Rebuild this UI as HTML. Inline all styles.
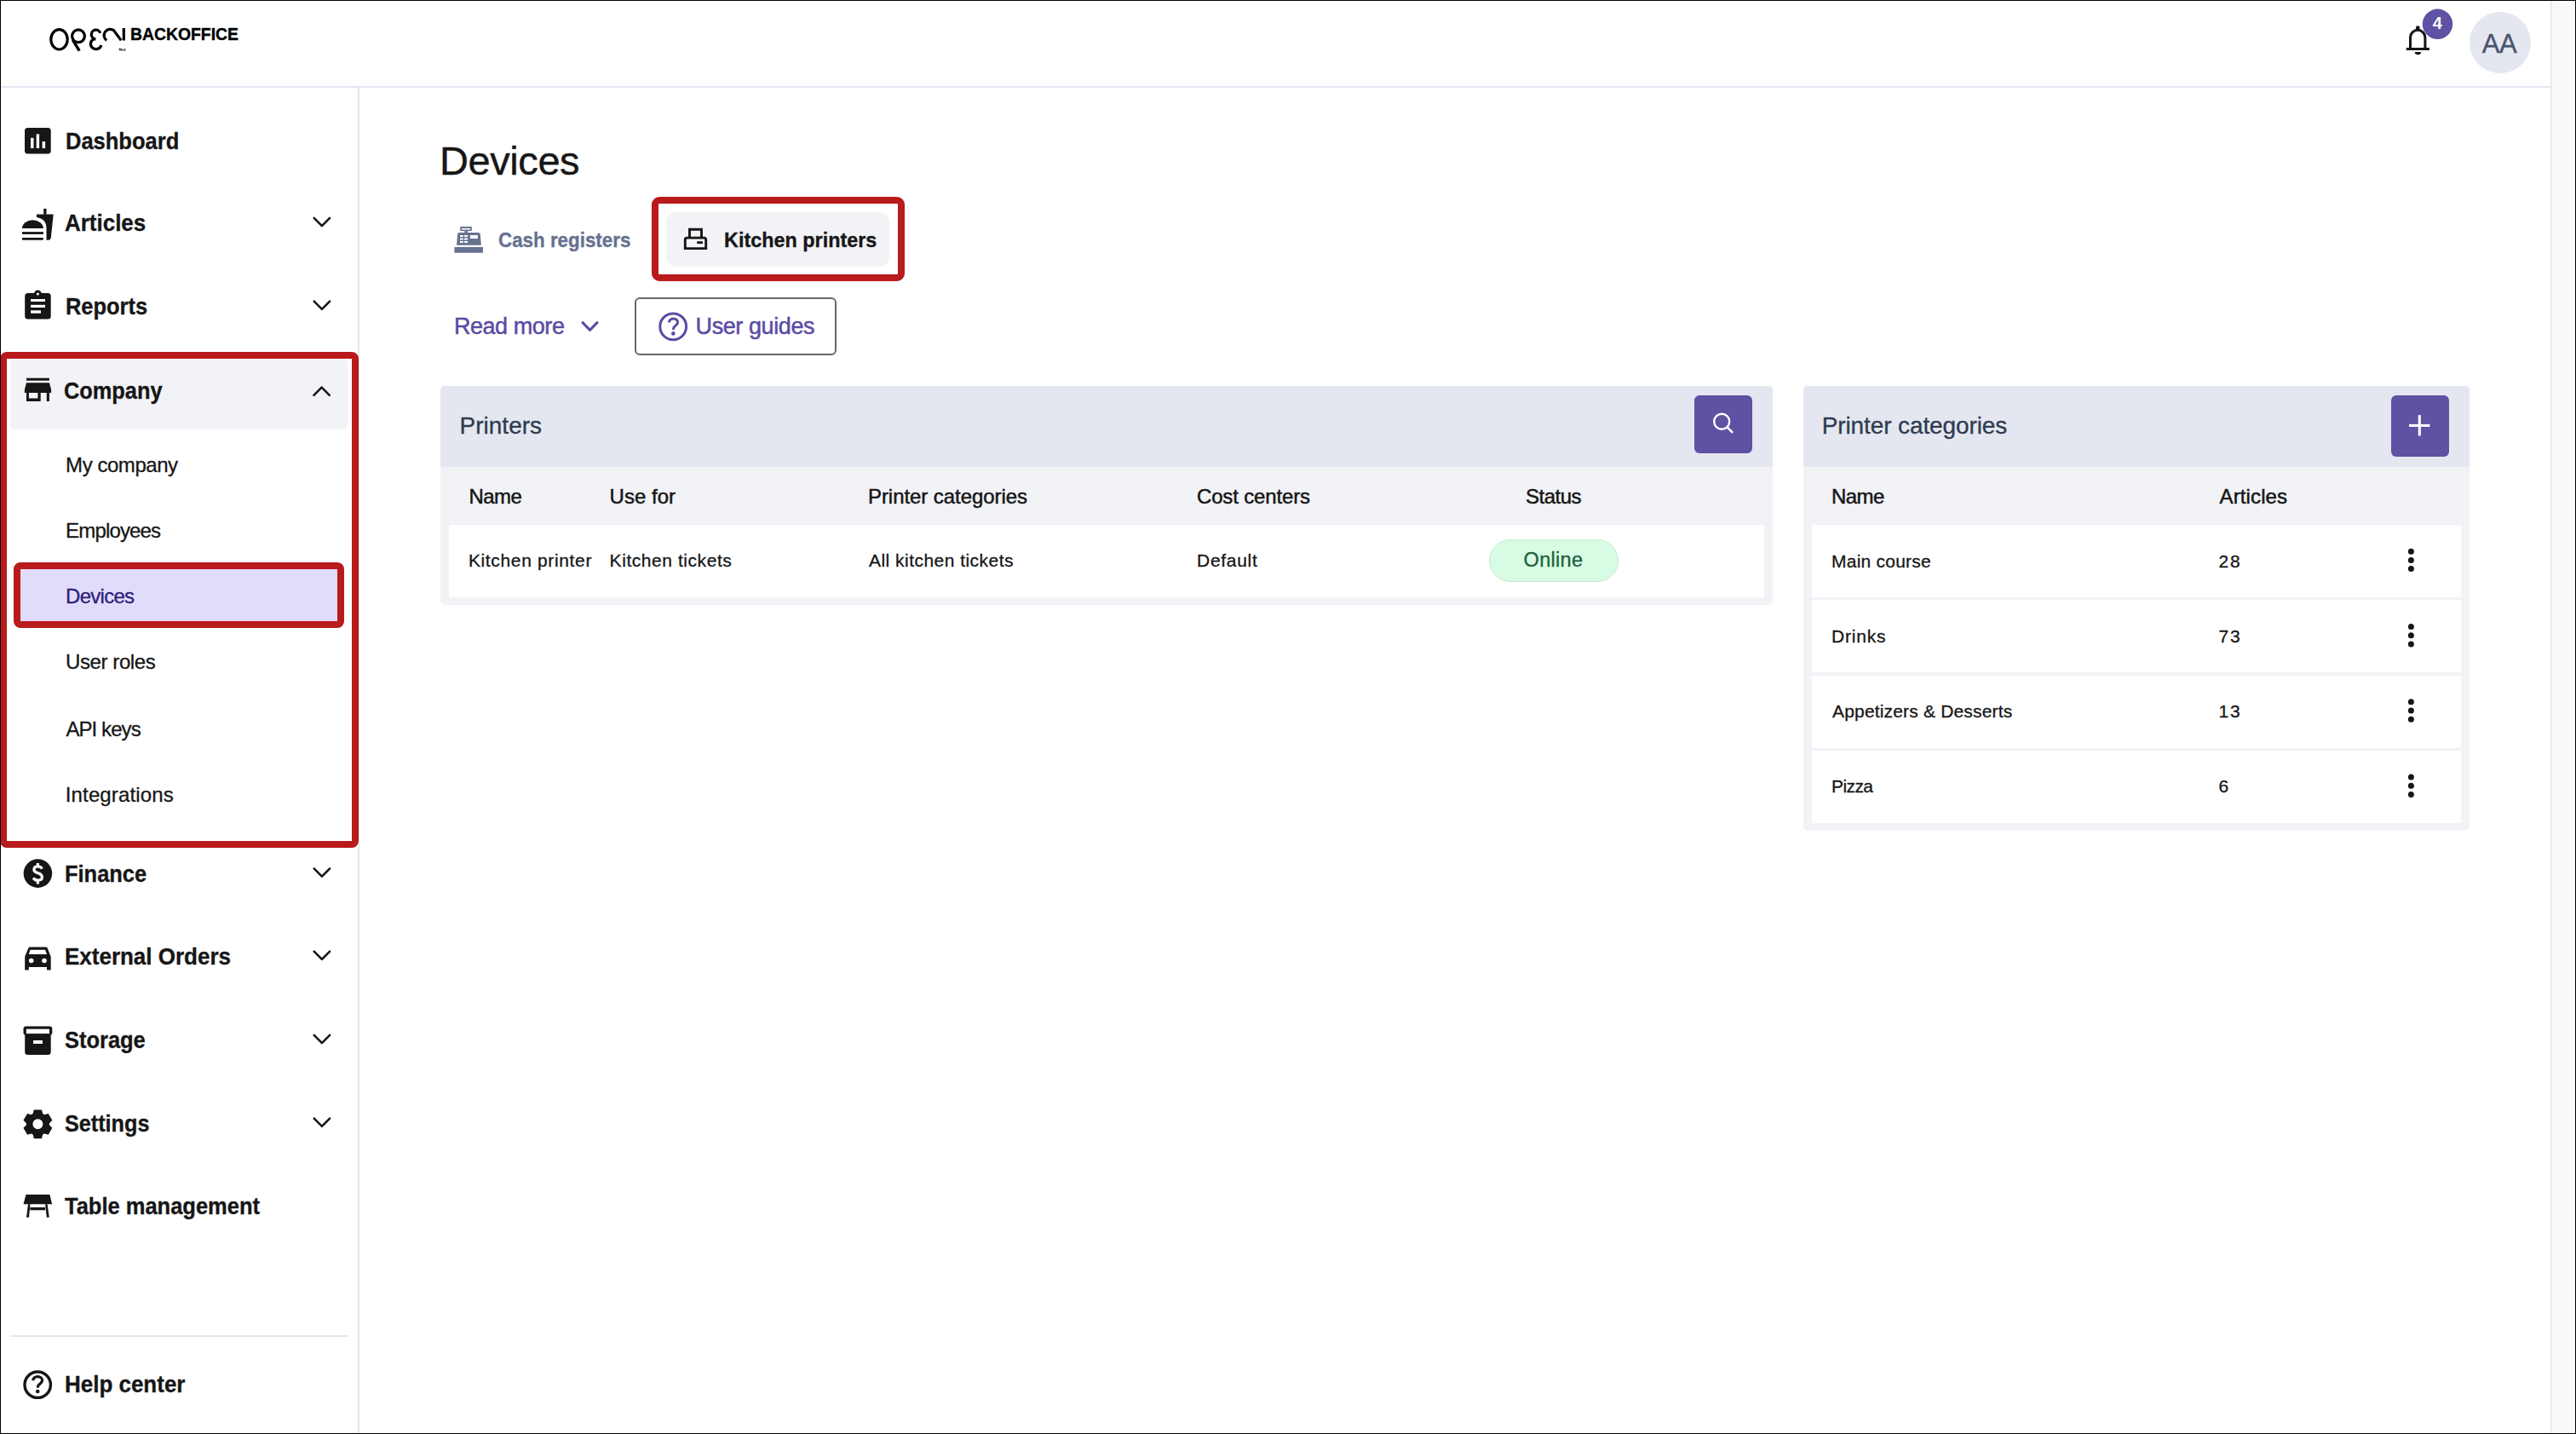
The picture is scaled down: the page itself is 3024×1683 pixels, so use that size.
<!DOCTYPE html>
<html><head><meta charset="utf-8"><title>Devices</title>
<style>
html,body{margin:0;padding:0;}
body{width:3024px;height:1683px;position:relative;overflow:hidden;background:#fff;font-family:"Liberation Sans",sans-serif;}
.a{position:absolute;}
.t{position:absolute;white-space:nowrap;}
svg{position:absolute;overflow:visible;}
</style></head><body>
<!-- scrollbar -->
<div class="a" style="left:2994px;top:1px;width:29px;height:1681px;background:#f9f9f9"></div>
<div class="a" style="left:2994px;top:1px;width:2px;height:1681px;background:#e9e9e9"></div>
<!-- header border -->
<div class="a" style="left:1px;top:101px;width:2993px;height:2px;background:#e3e7f0"></div>
<!-- sidebar border -->
<div class="a" style="left:420px;top:103px;width:2px;height:1579px;background:#e3e7f0"></div>
<!-- sidebar company bg -->
<div class="a" style="left:12px;top:421px;width:396px;height:83px;border-radius:5px;background:#f2f3f7"></div>
<div class="a" style="left:24px;top:668px;width:372px;height:61px;background:#e2dcfb"></div>
<div class="a" style="left:16px;top:660px;width:388px;height:77px;box-sizing:border-box;border:8px solid #b91a1c;border-radius:8px"></div>
<div class="a" style="left:0px;top:413px;width:420.5px;height:582px;box-sizing:border-box;border:8px solid #b91a1c;border-radius:8px"></div>
<!-- sidebar divider -->
<div class="a" style="left:12px;top:1567px;width:396px;height:2px;background:#e3e7f0"></div>

<!-- tabs -->
<div class="a" style="left:782px;top:249px;width:262px;height:64px;border-radius:12px;background:#f2f3f7"></div>
<div class="a" style="left:765px;top:231px;width:297px;height:99px;box-sizing:border-box;border:8px solid #b91a1c;border-radius:9px"></div>
<!-- user guides button -->
<div class="a" style="left:745px;top:349px;width:237px;height:68px;box-sizing:border-box;border:2px solid #676767;border-radius:6px"></div>

<!-- printers card -->
<div class="a" style="left:517px;top:453px;width:1564px;height:257px;border-radius:5px;background:#f2f3f7"></div>
<div class="a" style="left:517px;top:453px;width:1564px;height:94.8px;border-radius:5px 5px 2px 2px;background:#e4e7f0"></div>
<div class="a" style="left:527px;top:616px;width:1544px;height:85px;background:#fff"></div>
<div class="a" style="left:1989px;top:464px;width:68px;height:68px;border-radius:6px;background:#5f51a3"></div>
<div class="a" style="left:1748.3px;top:633px;width:152px;height:50px;box-sizing:border-box;border-radius:25px;background:#d7fbe3;border:1.5px solid #c2eecf"></div>

<!-- categories card -->
<div class="a" style="left:2117px;top:453.4px;width:782px;height:521.4px;border-radius:5px;background:#f2f3f7"></div>
<div class="a" style="left:2117px;top:453.4px;width:782px;height:94.6px;border-radius:5px 5px 2px 2px;background:#e4e7f0"></div>
<div class="a" style="left:2127px;top:616px;width:761.8px;height:85px;background:#fff"></div>
<div class="a" style="left:2127px;top:704.3px;width:761.8px;height:85px;background:#fff"></div>
<div class="a" style="left:2127px;top:792.6px;width:761.8px;height:85px;background:#fff"></div>
<div class="a" style="left:2127px;top:880.9px;width:761.8px;height:85px;background:#fff"></div>
<div class="a" style="left:2807px;top:464px;width:68px;height:72px;border-radius:6px;background:#5f51a3"></div>

<!-- avatar -->
<div class="a" style="left:2898.5px;top:13.8px;width:72px;height:72px;border-radius:50%;background:#e4e7f0"></div>

<svg style="left:0;top:0" width="3024" height="1683" viewBox="0 0 3024 1683">
 <g fill="none" stroke="#000" stroke-width="2.8">
  <!-- logo -->
  <g transform="translate(50,20)" stroke-width="3.2">
   <ellipse cx="19.5" cy="26.3" rx="9.7" ry="11.7"/>
   <circle cx="42" cy="22.3" r="7.4"/>
   <path d="M35.4 26.8 L43.2 39.6" stroke-width="3.4"/>
   <path d="M67.8 18.8 A5.4 5.4 0 1 0 62.4 25.8 L60.5 25.8 A6.3 6.1 0 1 0 68.8 33"/>
   <path d="M75.2 27.4 A7 7 0 1 1 83.5 15.6 L92.2 27.4"/>
   <rect x="93.7" y="13" width="3.2" height="14.5" fill="#000" stroke="none"/>
   <path d="M89.5 37.5 H92.3 M90.9 37.5 V39.8 M92.8 39.8 V37.5 L94.8 39.2 L96.8 37.5 V39.8" stroke-width="0.9"/>
  </g>
 </g>
 <!-- bell -->
 <g fill="#161616">
  <rect x="2824.8" y="56" width="27.1" height="3"/>
  <path d="M2829.5 57 V44 A8.7 8.7 0 0 1 2846.9 44 V57" fill="none" stroke="#161616" stroke-width="3"/>
  <rect x="2835.9" y="30.3" width="4.8" height="5" rx="2.4"/>
  <path d="M2834.8 61 H2842.1 A3.65 3.2 0 0 1 2834.8 61 Z"/>
 </g>
 <circle cx="2861.5" cy="28.3" r="17.7" fill="#5f51a3"/>

 <!-- sidebar icons -->
 <g fill="#161616">
  <!-- dashboard -->
  <rect x="29" y="150" width="30.7" height="30.4" rx="3.5"/>
  <rect x="36" y="161.8" width="3.5" height="12.2" fill="#fff"/>
  <rect x="42.7" y="157.4" width="3.4" height="16.6" fill="#fff"/>
  <rect x="49.6" y="166" width="3.5" height="8" fill="#fff"/>
  <!-- articles -->
  <g transform="translate(20,240)">
   <path d="M5.9 28.1 A12.5 9.8 0 0 1 30.9 28.1 Z"/>
   <rect x="5.9" y="32.1" width="25" height="2.8"/>
   <path d="M5.9 38.9 H30.9 V40.4 Q30.9 41.7 29.6 41.7 H7.2 Q5.9 41.7 5.9 40.4 Z"/>
   <rect x="31.2" y="4.9" width="3.3" height="7"/>
   <path d="M23 11.5 H42.7 L39.8 39 Q39.4 41.7 37 41.7 H34.5 V28 Q34.5 17 23 15 Z"/>
  </g>
  <!-- reports -->
  <g transform="translate(20,335)">
   <rect x="9.2" y="9.1" width="30.5" height="30.5" rx="3.5"/>
   <circle cx="24.4" cy="10.2" r="4.6"/>
   <circle cx="24.4" cy="9.9" r="1.5" fill="#fff"/>
   <rect x="16" y="16" width="17" height="3" fill="#fff"/>
   <rect x="16" y="22.8" width="17" height="3.2" fill="#fff"/>
   <rect x="16" y="29.3" width="12" height="3.4" fill="#fff"/>
  </g>
  <!-- company store -->
  <rect x="31" y="443.7" width="26.9" height="3"/>
  <path d="M31 449.2 H57.9 L60.1 457 V460.9 H28.9 V457 Z"/>
  <path d="M31 460.9 H47.7 V471 H31 Z M33.9 460.9 V467.6 H44.4 V460.9 Z" fill-rule="evenodd"/>
  <rect x="54.8" y="460.9" width="3.1" height="10.1"/>
  <!-- finance -->
  <circle cx="44.4" cy="1025.1" r="16.8"/>
  <!-- car -->
  <g transform="translate(20,1100)">
   <path d="M13.4 12.5 Q13.8 11.5 15 11.5 H34 Q35.2 11.5 35.6 12.5 L39.7 22.7 V38 Q39.7 38.5 39.2 38.5 H35.5 Q35 38.5 35 38 V34.9 H13.8 V38 Q13.8 38.5 13.3 38.5 H9.7 Q9.2 38.5 9.2 38 V22.7 Z"/>
   <path d="M15.5 14.8 H33 L35 20 H13.8 Z" fill="#fff"/>
   <circle cx="16.7" cy="27.5" r="2.8" fill="#fff"/>
   <circle cx="32" cy="27.5" r="2.8" fill="#fff"/>
  </g>
  <!-- storage -->
  <g transform="translate(20,1195)">
   <rect x="7.5" y="9.4" width="33.8" height="10.5" rx="3"/>
   <rect x="10.8" y="12.7" width="27.2" height="5.4" fill="#fff"/>
   <path d="M9.2 19.9 H39.7 V39.4 Q39.7 42.9 36.2 42.9 H12.7 Q9.2 42.9 9.2 39.4 Z"/>
   <rect x="19" y="26" width="11" height="4" fill="#fff"/>
  </g>
  <!-- table -->
  <g transform="translate(20,1390)">
   <path d="M10.5 12 H38.4 L41.1 23.2 H7.5 Z"/>
   <path d="M13 23.2 H15.5 L14 38.7 H11 Z"/>
   <path d="M33.1 23.2 H35.6 L37.8 38.7 H34.8 Z"/>
   <rect x="15.3" y="27" width="17.8" height="3.3"/>
  </g>
 </g>
 <!-- finance $ -->
 <g transform="translate(20,1000)" fill="none" stroke="#fff" stroke-width="3.2">
  <path d="M29.4 19.6 Q28 16.8 24.4 16.8 Q19.9 16.8 19.9 20.4 Q19.9 23.3 24.4 24.6 Q29.4 26 29.4 29.6 Q29.4 33.2 24.4 33.2 Q20.6 33.2 19.2 30.2"/>
  <path d="M24.4 13 V17 M24.4 33 V37.5"/>
 </g>
 <!-- gear -->
 <g transform="translate(44.4,1319.3)" fill="#161616">
  <path d="M-5.80 -12.30 L-4.55 -16.90 L4.55 -16.90 L5.80 -12.30 L7.75 -11.17 L12.36 -12.39 L16.91 -4.51 L13.55 -1.13 L13.55 1.13 L16.91 4.51 L12.36 12.39 L7.75 11.17 L5.80 12.30 L4.55 16.90 L-4.55 16.90 L-5.80 12.30 L-7.75 11.17 L-12.36 12.39 L-16.91 4.51 L-13.55 1.13 L-13.55 -1.13 L-16.91 -4.51 L-12.36 -12.39 L-7.75 -11.17 Z M0 -6 A6 6 0 1 0 0 6 A6 6 0 1 0 0 -6 Z" fill-rule="evenodd"/>
 </g>
 <!-- help center -->
 <circle cx="44.2" cy="1625.2" r="15.2" fill="none" stroke="#161616" stroke-width="3.4"/>
 <path d="M38.9 1620.2 C38.9 1617.2 41.3 1615.6 44.3 1615.6 C47.4 1615.6 49.6 1617.5 49.6 1620 C49.6 1622.6 47.4 1623.6 45.8 1625 C44.7 1626 44.3 1627 44.3 1628.8" fill="none" stroke="#161616" stroke-width="3.2"/>
 <circle cx="44.2" cy="1633" r="2.3" fill="#161616"/>

 <!-- chevrons -->
 <g fill="none" stroke="#161616" stroke-width="2.6" stroke-linecap="round" stroke-linejoin="round">
  <path d="M368.7 255.9 L377.9 265.1 L387.1 255.9"/>
  <path d="M368.7 353.7 L377.9 362.9 L387.1 353.7"/>
  <path d="M368.4 463.9 L377.6 454.6 L386.8 463.9"/>
  <path d="M368.7 1019.4 L377.9 1028.6 L387.1 1019.4"/>
  <path d="M368.7 1116.6 L377.9 1125.8 L387.1 1116.6"/>
  <path d="M368.7 1214.9 L377.9 1224.1 L387.1 1214.9"/>
  <path d="M368.7 1312.7 L377.9 1321.9 L387.1 1312.7"/>
 </g>

 <!-- cash register -->
 <g transform="translate(525,255)" fill="#66728f">
  <path d="M15.2 11 H28.8 V15.9 H15.2 Z M16.9 12.9 V14.5 H27 V12.9 Z" fill-rule="evenodd"/>
  <rect x="20.4" y="15.9" width="3.5" height="2.5"/>
  <path d="M14.5 18.1 H36.4 Q38.9 18.1 38.9 21 L39.9 32.8 H11 L12 21 Q12 18.1 14.5 18.1 Z M15 21.1 V23 H18.8 V21.1 Z M20 21.1 V23 H24.1 V21.1 Z M15 24.6 V26.5 H18.8 V24.6 Z M20 24.6 V26.5 H24.1 V24.6 Z M15 28 V30 H18.8 V28 Z M20 28 V30 H24.1 V28 Z M26.9 20.9 V24.9 H35.9 V20.9 Z" fill-rule="evenodd"/>
  <rect x="8.4" y="35" width="33.6" height="6.7"/>
 </g>
 <!-- printer icon -->
 <g fill="none" stroke="#161616" stroke-width="2.9">
  <path d="M809.5 278 V269.3 H823.5 V278"/>
  <path d="M804.3 291.6 V281.3 Q804.3 279.1 806.5 279.1 H826.5 Q828.7 279.1 828.7 281.3 V291.6 Z"/>
 </g>
 <rect x="818.2" y="283.2" width="6.7" height="2.9" fill="#161616"/>

 <!-- read more chevron -->
 <path d="M684 378.6 L692.5 387.4 L701 378.6" fill="none" stroke="#5a4ba5" stroke-width="3" stroke-linecap="round" stroke-linejoin="round"/>
 <!-- user guides ? -->
 <circle cx="790.2" cy="383.3" r="15.4" fill="none" stroke="#5a4ba5" stroke-width="3"/>
 <path d="M785.5 378.6 C785.5 375.5 787.8 373.9 790.5 373.9 C793.5 373.9 795.6 375.8 795.6 378.3 C795.6 380.8 793.5 381.8 791.9 383.2 C790.8 384.2 790.4 385.2 790.4 387.0" fill="none" stroke="#5a4ba5" stroke-width="3"/>
 <circle cx="790.3" cy="391.4" r="2.3" fill="#5a4ba5"/>

 <!-- search icon -->
 <circle cx="2021.2" cy="494.7" r="9" fill="none" stroke="#fff" stroke-width="2.4"/>
 <path d="M2027.6 501.3 L2034 507.8" stroke="#fff" stroke-width="2.6"/>
 <!-- plus -->
 <rect x="2828" y="497.85" width="24.4" height="3.1" fill="#fff"/>
 <rect x="2838.75" y="487.1" width="3.1" height="24.3" fill="#fff"/>
 <!-- kebabs -->
 <g fill="#161616">
  <circle cx="2830.4" cy="647.2" r="3.5"/><circle cx="2830.4" cy="657.4" r="3.5"/><circle cx="2830.4" cy="667.6" r="3.5"/>
  <circle cx="2830.4" cy="735.5" r="3.5"/><circle cx="2830.4" cy="745.7" r="3.5"/><circle cx="2830.4" cy="755.9" r="3.5"/>
  <circle cx="2830.4" cy="823.8" r="3.5"/><circle cx="2830.4" cy="834" r="3.5"/><circle cx="2830.4" cy="844.2" r="3.5"/>
  <circle cx="2830.4" cy="912.1" r="3.5"/><circle cx="2830.4" cy="922.3" r="3.5"/><circle cx="2830.4" cy="932.5" r="3.5"/>
 </g>
</svg>

<!-- frame -->
<div class="a" style="left:0;top:0;width:3024px;height:1px;background:#000"></div>
<div class="a" style="left:0;top:0;width:1px;height:1683px;background:#000"></div>
<div class="a" style="left:3023px;top:0;width:1px;height:1683px;background:#000"></div>
<div class="a" style="left:0;top:1682px;width:3024px;height:1px;background:#000"></div>

<div class="t" style="left:76.59px;top:151.70px;font-size:28px;line-height:28px;color:#161616;transform:scaleX(0.9109);transform-origin:0 0;-webkit-text-stroke:0.35px #161616;font-weight:700;">Dashboard</div>
<div class="t" style="left:76.10px;top:248.30px;font-size:28px;line-height:28px;color:#161616;transform:scaleX(0.9271);transform-origin:0 0;-webkit-text-stroke:0.35px #161616;font-weight:700;">Articles</div>
<div class="t" style="left:76.59px;top:346.10px;font-size:28px;line-height:28px;color:#161616;transform:scaleX(0.9086);transform-origin:0 0;-webkit-text-stroke:0.35px #161616;font-weight:700;">Reports</div>
<div class="t" style="left:75.39px;top:444.50px;font-size:28px;line-height:28px;color:#161616;transform:scaleX(0.9055);transform-origin:0 0;-webkit-text-stroke:0.35px #161616;font-weight:700;">Company</div>
<div class="t" style="left:75.59px;top:1011.80px;font-size:28px;line-height:28px;color:#161616;transform:scaleX(0.9085);transform-origin:0 0;-webkit-text-stroke:0.35px #161616;font-weight:700;">Finance</div>
<div class="t" style="left:75.57px;top:1109.00px;font-size:28px;line-height:28px;color:#161616;transform:scaleX(0.9280);transform-origin:0 0;-webkit-text-stroke:0.35px #161616;font-weight:700;">External Orders</div>
<div class="t" style="left:75.80px;top:1207.30px;font-size:28px;line-height:28px;color:#161616;transform:scaleX(0.9086);transform-origin:0 0;-webkit-text-stroke:0.35px #161616;font-weight:700;">Storage</div>
<div class="t" style="left:75.80px;top:1305.10px;font-size:28px;line-height:28px;color:#161616;transform:scaleX(0.9000);transform-origin:0 0;-webkit-text-stroke:0.35px #161616;font-weight:700;">Settings</div>
<div class="t" style="left:75.80px;top:1402.30px;font-size:28px;line-height:28px;color:#161616;transform:scaleX(0.9103);transform-origin:0 0;-webkit-text-stroke:0.35px #161616;font-weight:700;">Table management</div>
<div class="t" style="left:76.27px;top:1611.10px;font-size:28px;line-height:28px;color:#161616;transform:scaleX(0.9274);transform-origin:0 0;-webkit-text-stroke:0.35px #161616;font-weight:700;">Help center</div>
<div class="t" style="left:77.10px;top:533.58px;font-size:24px;line-height:24px;color:#161616;-webkit-text-stroke:0.3px #161616;letter-spacing:-0.449px;">My company</div>
<div class="t" style="left:77.10px;top:611.28px;font-size:24px;line-height:24px;color:#161616;-webkit-text-stroke:0.3px #161616;letter-spacing:-0.840px;">Employees</div>
<div class="t" style="left:77.10px;top:688.28px;font-size:24px;line-height:24px;color:#2a1f7a;-webkit-text-stroke:0.3px #2a1f7a;letter-spacing:-0.727px;">Devices</div>
<div class="t" style="left:77.10px;top:765.48px;font-size:24px;line-height:24px;color:#161616;-webkit-text-stroke:0.3px #161616;letter-spacing:-0.418px;">User roles</div>
<div class="t" style="left:77.40px;top:843.58px;font-size:24px;line-height:24px;color:#161616;-webkit-text-stroke:0.3px #161616;letter-spacing:-0.914px;">API keys</div>
<div class="t" style="left:76.80px;top:920.98px;font-size:24px;line-height:24px;color:#161616;-webkit-text-stroke:0.3px #161616;letter-spacing:0.135px;">Integrations</div>
<div class="t" style="left:153.41px;top:30.69px;font-size:19.5px;line-height:19.5px;color:#000;transform:scaleX(0.9935);transform-origin:0 0;-webkit-text-stroke:0.35px #000;font-weight:700;">BACKOFFICE</div>
<div class="t" style="left:2913.80px;top:35.76px;font-size:31px;line-height:31px;color:#4b5370;-webkit-text-stroke:0.3px #4b5370;letter-spacing:-0.477px;-webkit-text-stroke:0.4px #4b5370;">AA</div>
<div class="t" style="left:2855.80px;top:17.17px;font-size:20px;line-height:20px;color:#fff;font-weight:700;">4</div>
<div class="t" style="left:516.10px;top:165.21px;font-size:47px;line-height:47px;color:#161616;-webkit-text-stroke:0.4px #161616;letter-spacing:-0.444px;">Devices</div>
<div class="t" style="left:585.00px;top:269.68px;font-size:24px;line-height:24px;color:#66728f;transform:scaleX(0.9315);transform-origin:0 0;-webkit-text-stroke:0.35px #66728f;font-weight:700;">Cash registers</div>
<div class="t" style="left:850.33px;top:269.68px;font-size:24px;line-height:24px;color:#161616;transform:scaleX(0.9744);transform-origin:0 0;-webkit-text-stroke:0.35px #161616;font-weight:700;">Kitchen printers</div>
<div class="t" style="left:532.90px;top:370.14px;font-size:27px;line-height:27px;color:#5a4ba5;-webkit-text-stroke:0.5px #5a4ba5;letter-spacing:-0.443px;">Read more</div>
<div class="t" style="left:816.60px;top:370.14px;font-size:27px;line-height:27px;color:#5a4ba5;-webkit-text-stroke:0.5px #5a4ba5;letter-spacing:-0.417px;">User guides</div>
<div class="t" style="left:539.50px;top:486.20px;font-size:28px;line-height:28px;color:#2e3a4f;-webkit-text-stroke:0.3px #2e3a4f;letter-spacing:0.019px;">Printers</div>
<div class="t" style="left:550.50px;top:570.68px;font-size:24px;line-height:24px;color:#161616;-webkit-text-stroke:0.5px #161616;letter-spacing:-0.557px;">Name</div>
<div class="t" style="left:715.60px;top:570.68px;font-size:24px;line-height:24px;color:#161616;-webkit-text-stroke:0.5px #161616;letter-spacing:0.023px;">Use for</div>
<div class="t" style="left:1019.00px;top:570.68px;font-size:24px;line-height:24px;color:#161616;-webkit-text-stroke:0.5px #161616;letter-spacing:-0.064px;">Printer categories</div>
<div class="t" style="left:1405.00px;top:570.68px;font-size:24px;line-height:24px;color:#161616;-webkit-text-stroke:0.5px #161616;letter-spacing:-0.156px;">Cost centers</div>
<div class="t" style="left:1791.00px;top:570.68px;font-size:24px;line-height:24px;color:#161616;-webkit-text-stroke:0.5px #161616;letter-spacing:-0.488px;">Status</div>
<div class="t" style="left:549.90px;top:646.92px;font-size:21px;line-height:21px;color:#161616;-webkit-text-stroke:0.3px #161616;letter-spacing:0.649px;">Kitchen printer</div>
<div class="t" style="left:715.60px;top:646.92px;font-size:21px;line-height:21px;color:#161616;-webkit-text-stroke:0.3px #161616;letter-spacing:0.558px;">Kitchen tickets</div>
<div class="t" style="left:1020.00px;top:646.92px;font-size:21px;line-height:21px;color:#161616;-webkit-text-stroke:0.3px #161616;letter-spacing:0.469px;">All kitchen tickets</div>
<div class="t" style="left:1405.00px;top:646.92px;font-size:21px;line-height:21px;color:#161616;-webkit-text-stroke:0.3px #161616;letter-spacing:0.716px;">Default</div>
<div class="t" style="left:1788.60px;top:645.71px;font-size:23.5px;line-height:23.5px;color:#21603a;-webkit-text-stroke:0.3px #21603a;letter-spacing:0.308px;">Online</div>
<div class="t" style="left:2138.70px;top:485.90px;font-size:28px;line-height:28px;color:#2e3a4f;-webkit-text-stroke:0.3px #2e3a4f;letter-spacing:-0.108px;">Printer categories</div>
<div class="t" style="left:2150.00px;top:570.88px;font-size:24px;line-height:24px;color:#161616;-webkit-text-stroke:0.5px #161616;letter-spacing:-0.557px;">Name</div>
<div class="t" style="left:2605.50px;top:570.88px;font-size:24px;line-height:24px;color:#161616;-webkit-text-stroke:0.5px #161616;letter-spacing:0.131px;">Articles</div>
<div class="t" style="left:2150.00px;top:647.62px;font-size:21px;line-height:21px;color:#161616;-webkit-text-stroke:0.3px #161616;letter-spacing:0.230px;">Main course</div>
<div class="t" style="left:2604.50px;top:647.62px;font-size:21px;line-height:21px;color:#161616;-webkit-text-stroke:0.3px #161616;letter-spacing:1.821px;">28</div>
<div class="t" style="left:2150.00px;top:735.92px;font-size:21px;line-height:21px;color:#161616;-webkit-text-stroke:0.3px #161616;letter-spacing:0.799px;">Drinks</div>
<div class="t" style="left:2604.50px;top:735.92px;font-size:21px;line-height:21px;color:#161616;-webkit-text-stroke:0.3px #161616;letter-spacing:1.821px;">73</div>
<div class="t" style="left:2151.00px;top:824.22px;font-size:21px;line-height:21px;color:#161616;-webkit-text-stroke:0.3px #161616;letter-spacing:0.173px;">Appetizers &amp; Desserts</div>
<div class="t" style="left:2604.50px;top:824.22px;font-size:21px;line-height:21px;color:#161616;-webkit-text-stroke:0.3px #161616;letter-spacing:1.821px;">13</div>
<div class="t" style="left:2150.00px;top:911.62px;font-size:21px;line-height:21px;color:#161616;-webkit-text-stroke:0.3px #161616;letter-spacing:-0.593px;">Pizza</div>
<div class="t" style="left:2604.50px;top:911.62px;font-size:21px;line-height:21px;color:#161616;-webkit-text-stroke:0.3px #161616;">6</div>
</body></html>
